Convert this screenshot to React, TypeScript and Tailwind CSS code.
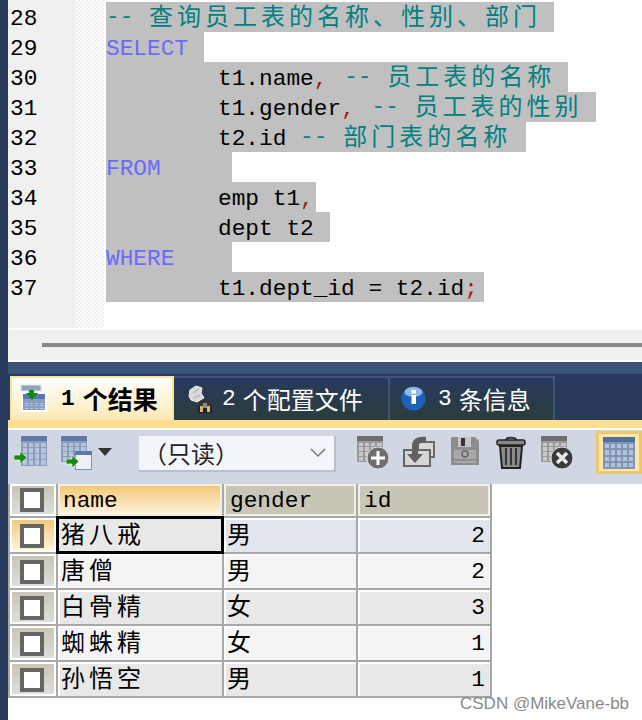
import type { ReactNode } from "react"

const mono = "font-['Liberation_Mono','Noto_Sans_CJK_SC',monospace]"
const cjk = "font-['Noto_Sans_CJK_SC',sans-serif]"

function Zh({ children, className = "" }: { children: ReactNode; className?: string }) {
  return <span className={`${cjk} text-[24px] tracking-[4px] ${className}`}>{children}</span>
}

const Punct = ({ children, className = "" }: { children: ReactNode; className?: string }) => <span className={`text-[#a02000] ${className}`}>{children}</span>
const Kw = ({ children }: { children: ReactNode }) => <span className="text-[#6a6aff]">{children}</span>
const Note = ({ children }: { children: ReactNode }) => (
  <span className="text-[#008080] leading-[0px]">
    <span className="align-[2px]">{"-- "}</span>
    <Zh className="ml-[2px]">{children}</Zh>
  </span>
)

const lines = [
  { n: 28, w: "w-[448px]", pad: "", code: <Note>查询员工表的名称、性别、部门</Note> },
  { n: 29, w: "w-[98px]", pad: "", code: <Kw>SELECT</Kw> },
  { n: 30, w: "w-[462px]", pad: "pl-[112px]", code: <>t1.name<Punct className="mr-[3px]">,</Punct> <Note>员工表的名称</Note></> },
  { n: 31, w: "w-[490px]", pad: "pl-[112px]", code: <>t1.gender<Punct className="mr-[3px]">,</Punct> <Note>员工表的性别</Note></> },
  { n: 32, w: "w-[420px]", pad: "pl-[112px]", code: <>t2.id <Note>部门表的名称</Note></> },
  { n: 33, w: "w-[126px]", pad: "", code: <Kw>FROM</Kw> },
  { n: 34, w: "w-[210px]", pad: "pl-[112px]", code: <>emp t1<Punct>,</Punct></> },
  { n: 35, w: "w-[224px]", pad: "pl-[112px]", code: "dept t2" },
  { n: 36, w: "w-[126px]", pad: "", code: <Kw>WHERE</Kw> },
  { n: 37, w: "w-[378px]", pad: "pl-[112px]", code: <>t1.dept_id = t2.id<Punct>;</Punct></> },
]

function Grid({ x, y, w, h, head, cell, line, cols = 4, rows = 4, gap = 1.5 }: { x: number; y: number; w: number; h: number; head: string; cell: string; line: string; cols?: number; rows?: number; gap?: number }) {
  const top = 5
  const cw = (w - gap * (cols + 1)) / cols
  const ch = (h - top - gap * (rows + 1)) / rows
  const cells: { cx: number; cy: number }[] = []
  for (let r = 0; r < rows; r++) {
    for (let c = 0; c < cols; c++) {
      cells.push({ cx: x + gap + c * (cw + gap), cy: y + top + gap + r * (ch + gap) })
    }
  }
  return (
    <g shapeRendering="crispEdges">
      <rect x={x} y={y} width={w} height={h} fill={line} />
      <rect x={x} y={y} width={w} height={top} fill={head} />
      {cells.map((k) => <rect key={`${k.cx}-${k.cy}`} x={k.cx} y={k.cy} width={cw} height={ch} fill={cell} />)}
    </g>
  )
}

const ArrowRight = ({ x, y }: { x: number; y: number }) => (
  <path d={`M${x} ${y + 3}h6v-4l7 6.500-7 6.500v-4h-6z`} fill="#1a8a12" stroke="#fff" strokeWidth=".6" />
)

function TabResultIcon() {
  return (
    <svg width="28" height="30" viewBox="0 0 28 30">
      <rect x="1" y="1" width="20" height="6" fill="#8fa3bd" stroke="#dfe5ee" />
      <rect x="1" y="8" width="26" height="20" fill="#fff" />
      <g transform="translate(3 10)"><Grid x={0} y={0} w={22} h={16} head="#5a78b0" cell="#b6c3dc" line="#8a9cc0" /></g>
      <path d="M6 9h3V6h5v3h4l-6 7z" fill="#0f8a12" />
    </svg>
  )
}

function TabConfigIcon() {
  return (
    <svg width="28" height="30" viewBox="0 0 28 30">
      <path d="M3 12l1-6 6-4 6 2-1 5 3 5-7 4-6-2z" fill="#d8d8d8" stroke="#f2f2f2" />
      <path d="M7 9l6-4M8 14l6-3" stroke="#a8a8a8" />
      <path d="M13 23v-3a6 5 0 0 1 12 0v3" fill="#333" />
      <rect x="12" y="22" width="14" height="7" rx="1" fill="#222" />
      <rect x="14" y="22" width="3" height="6" fill="#d9b860" />
      <rect x="21" y="22" width="3" height="6" fill="#d9b860" />
      <rect x="17" y="19" width="4" height="5" fill="#8a8a8a" />
    </svg>
  )
}

function TabInfoIcon() {
  return (
    <svg width="26" height="26" viewBox="0 0 26 26">
      <circle cx="12.500" cy="12.500" r="12" fill="#1d62b8" />
      <ellipse cx="12.500" cy="6" rx="9" ry="5" fill="#8fb8e6" />
      <rect x="10.500" y="4" width="4.500" height="3.500" fill="#fff" />
      <rect x="10.500" y="9" width="4.500" height="9" fill="#fff" />
    </svg>
  )
}

function ExportGridIcon() {
  return (
    <svg width="34" height="32" viewBox="0 0 34 32">
      <Grid x={7} y={0} w={26} h={30} head="#5d7aa6" cell="#b6c3d8" line="#8a9dbf" />
      <ArrowRight x={0} y={16} />
    </svg>
  )
}

function ExportFileIcon() {
  return (
    <svg width="32" height="34" viewBox="0 0 32 34">
      <Grid x={1} y={0} w={26} h={26} head="#5d7aa6" cell="#b6c3d8" line="#8a9dbf" />
      <rect x="15.500" y="15.500" width="16" height="18" fill="#eef1f6" stroke="#7f93b5" />
      <rect x="15" y="15" width="17" height="4" fill="#5d7aa6" />
      <ArrowRight x={6} y={20} />
    </svg>
  )
}

function AddRowIcon() {
  return (
    <svg width="34" height="34" viewBox="0 0 34 34">
      <Grid x={1} y={0} w={26} h={26} head="#6f6f6f" cell="#c8c8c8" line="#999" />
      <circle cx="22" cy="22" r="11" fill="#6e6e6e" stroke="#dadfe7" />
      <path d="M22 15v14M15 22h14" stroke="#fff" strokeWidth="3" />
    </svg>
  )
}

function RestoreIcon() {
  return (
    <svg width="34" height="32" viewBox="0 0 34 32">
      <rect x="16" y="6" width="16" height="15" fill="#d8d8d8" stroke="#6a6a6a" strokeWidth="2" />
      <path d="M2 14h26v16H2z" fill="#d6d6d6" stroke="#666" strokeWidth="2" />
      <path d="M24 1c-8-1-14 2-14 9v8H5l8 9 8-9h-5v-7c0-3 3-5 8-5z" fill="#606060" />
    </svg>
  )
}

function SaveIcon() {
  return (
    <svg width="30" height="30" viewBox="0 0 30 30">
      <path d="M1 1h24l4 4v24H1z" fill="#8e8e8e" />
      <rect x="8" y="1" width="13" height="10" fill="#c4c4c4" />
      <rect x="11" y="2" width="4" height="8" fill="#333" />
      <rect x="4" y="14" width="22" height="13" fill="#a8a8a8" />
      <circle cx="15" cy="18" r="3" fill="none" stroke="#666" strokeWidth="1.500" />
      <path d="M4 24h22" stroke="#777" />
    </svg>
  )
}

function TrashIcon() {
  return (
    <svg width="30" height="34" viewBox="0 0 30 34">
      <path d="M10 4c0-3 10-3 10 0" fill="none" stroke="#333" strokeWidth="2" />
      <rect x="1" y="4" width="28" height="5" rx="2" fill="#888" stroke="#222" strokeWidth="1.500" />
      <path d="M4 10h22l-2 22H6z" fill="#8c8c8c" stroke="#222" strokeWidth="2" />
      <path d="M10 12v17M15 12v17M20 12v17" stroke="#333" strokeWidth="2" />
    </svg>
  )
}

function DeleteRowIcon() {
  return (
    <svg width="34" height="34" viewBox="0 0 34 34">
      <Grid x={1} y={0} w={26} h={26} head="#6f6f6f" cell="#c8c8c8" line="#999" />
      <circle cx="22" cy="22" r="11" fill="#3a3a3a" stroke="#dadfe7" />
      <path d="M17 17l10 10M27 17l-10 10" stroke="#e8e8e8" strokeWidth="3.500" />
    </svg>
  )
}

const rows = [
  { name: "猪八戒", gender: "男", id: 2 },
  { name: "唐僧", gender: "男", id: 2 },
  { name: "白骨精", gender: "女", id: 3 },
  { name: "蜘蛛精", gender: "女", id: 1 },
  { name: "孙悟空", gender: "男", id: 1 },
]

function RowHead({ active = false, header = false }: { active?: boolean; header?: boolean }) {
  return (
    <div className={`flex items-center justify-center border-2 border-white pr-[2px] ${header ? "" : "pt-[2px]"} ${active ? "bg-gradient-to-b from-[#f5c878] to-[#fdf3dc]" : "bg-gradient-to-b from-[#c9c6b8] to-[#dededa]"}`}>
      <div className="h-6 w-6 border-[4px] border-[#666] bg-white" />
    </div>
  )
}

function HeadCell({ label, active = false }: { label: string; active?: boolean }) {
  return (
    <div className={`border-2 border-[#f0efe9] pt-[3px] text-[22.800px] leading-[25px] text-black ${active ? "bg-gradient-to-b from-[#f5c878] to-[#fdf3dc] pl-[3px]" : "bg-[#c9c6b8] pl-[4px]"}`}>
      {label}
    </div>
  )
}

function Cell({ stripe, children, selected, right }: { stripe: string; children: ReactNode; selected?: boolean; right?: boolean }) {
  return (
    <div className={`flex items-center border-l-2 border-t-2 border-white ${stripe} ${selected ? "relative z-10 !border-transparent outline-[3px] outline-offset-[-1px] outline-black" : ""} ${right ? "justify-end pr-[5px]" : "pl-[1px]"} text-[22.800px] leading-none text-black`}>
      {children}
    </div>
  )
}

export default function App() {
  return (
    <div className="relative flex h-[720px] w-[642px] overflow-hidden bg-white">
      <div className="w-2 shrink-0 bg-[#283a5b]" />
      <div className="flex min-w-0 flex-1 flex-col">
        <div className="flex h-[328px] shrink-0">
          <div className={`w-[68px] shrink-0 bg-[#f0f0f0] pl-[2px] pt-[2px] ${mono} text-[22.800px] text-black`}>
            {lines.map((l) => <div key={l.n} className="h-[30px] pt-[4px] leading-[26px]">{l.n}</div>)}
          </div>
          <div className="w-[28px] shrink-0 bg-[repeating-conic-gradient(#ededed_0_25%,#ffffff_0_50%)] bg-[length:4px_4px]" />
          <div className={`flex-1 pl-[2px] pt-[2px] ${mono} text-[22.800px] text-black`}>
            {lines.map((l) => (
              <div key={l.n} className={`h-[30px] whitespace-pre bg-[#c0c0c0] pt-[4px] leading-[26px] ${l.pad} ${l.w}`}>{l.code}</div>
            ))}
          </div>
        </div>

        <div className="mt-[2px] flex h-[30px] shrink-0 flex-col justify-center bg-[#f0f0f0] pl-[34px]">
          <div className="h-1 bg-[#888888]" />
        </div>

        <div className="mt-[2px] h-3 shrink-0 bg-[#3a5478]" />
        <div className="flex h-[46px] shrink-0 items-end bg-[#283a5b] pl-[2px]">
          <div className="flex h-[44px] w-[164px] items-center border-x-2 border-t-2 border-[#fde29a] bg-gradient-to-b from-white to-[#fde9b4] pl-[8px]">
            <TabResultIcon />
            <span className={`ml-[13px] ${mono} text-[22.800px] font-bold text-black`}>1</span>
            <span className={`ml-[8px] ${cjk} text-[25px] font-bold text-black`}>个结果</span>
          </div>
          <div className="flex h-[44px] w-[216px] items-center border-r-2 border-t-2 border-[#3f5578] bg-gradient-to-b from-[#283a5b] to-[#2b3c3e] pl-[12px] text-white">
            <TabConfigIcon />
            <span className={`ml-[8px] ${mono} text-[22.800px]`}>2</span>
            <span className={`ml-[7px] ${cjk} text-[24px]`}>个配置文件</span>
          </div>
          <div className="flex h-[44px] w-[165px] items-center border-r-2 border-t-2 border-[#3f5578] bg-gradient-to-b from-[#283a5b] to-[#2b3c3e] pl-[11px] text-white">
            <TabInfoIcon />
            <span className={`ml-[11px] ${mono} text-[22.800px]`}>3</span>
            <span className={`ml-[7px] ${cjk} text-[24px]`}>条信息</span>
          </div>
        </div>
        <div className="h-2 shrink-0 bg-[#fddf8f]" />

        <div className="mt-[2px] flex h-[54px] shrink-0 items-start bg-[#d0d7e2] pl-[6px]">
          <div className="mt-[6px] flex w-[46px] shrink-0"><ExportGridIcon /></div>
          <div className="mt-[6px] flex w-[32px] shrink-0"><ExportFileIcon /></div>
          <div className="ml-[6px] mt-[18px] h-0 w-0 border-x-[7px] border-t-[8px] border-x-transparent border-t-[#333]" />
          <div className="ml-[27px] mt-[6px] flex h-[36px] w-[197px] shrink-0 items-center border-b-2 border-r-2 border-[#b8c0cc] bg-[#f2f5fa] pl-[4px] text-[#222]">
            <span className={`${cjk} text-[24px]`}>（只读）</span>
            <svg className="ml-auto mr-[8px]" width="16" height="10" viewBox="0 0 16 10">
              <path d="M1 1l7 7 7-7" fill="none" stroke="#777" strokeWidth="1.500" />
            </svg>
          </div>
          <div className="ml-[20px] mt-[6px] flex w-[46px] shrink-0"><AddRowIcon /></div>
          <div className="mt-[6px] flex w-[48px] shrink-0"><RestoreIcon /></div>
          <div className="mt-[6px] flex w-[46px] shrink-0"><SaveIcon /></div>
          <div className="mt-[6px] flex w-[44px] shrink-0"><TrashIcon /></div>
          <div className="mt-[6px] flex w-[56px] shrink-0"><DeleteRowIcon /></div>
          <div className="mt-[1px] flex h-[43px] w-[46px] shrink-0 items-center justify-center border-[3px] border-[#ecc870] bg-[#fde6a8]">
            <svg width="32" height="32" viewBox="0 0 32 32">
              <Grid x={0} y={0} w={32} h={32} head="#4f6f99" cell="#b4c2d8" line="#7e94b8" cols={5} rows={4} gap={2} />
            </svg>
          </div>
        </div>

        <div className={`grid w-[484px] grid-cols-[46px_164px_132px_132px] grid-rows-[32px_repeat(5,34px)] gap-[2px] border-x-2 border-b-2 border-[#a8a8a8] bg-[#a8a8a8] ${mono}`}>
          <RowHead header />
          <HeadCell label="name" active />
          <HeadCell label="gender" />
          <HeadCell label="id" />
          {rows.map((row, i) => {
            const first = i === 0
            const stripe = first ? "bg-[#e2e5ee]" : i % 2 === 1 ? "bg-[#f4f4f4]" : "bg-[#e8e8e8]"
            return [
              <RowHead key={`h${i}`} active={first} />,
              <Cell key={`n${i}`} stripe={first ? "bg-[#e8e8e8]" : stripe} selected={first}><Zh className="-mt-[6px]">{row.name}</Zh></Cell>,
              <Cell key={`g${i}`} stripe={stripe}><Zh className="-mt-[6px]">{row.gender}</Zh></Cell>,
              <Cell key={`i${i}`} stripe={stripe} right>{row.id}</Cell>,
            ]
          })}
        </div>
      </div>

      <span className="absolute left-[460px] top-[694px] font-['Liberation_Sans',sans-serif] text-[17px] leading-[20px] text-[#8a8a8a]">
        CSDN @MikeVane-bb
      </span>
    </div>
  )
}
